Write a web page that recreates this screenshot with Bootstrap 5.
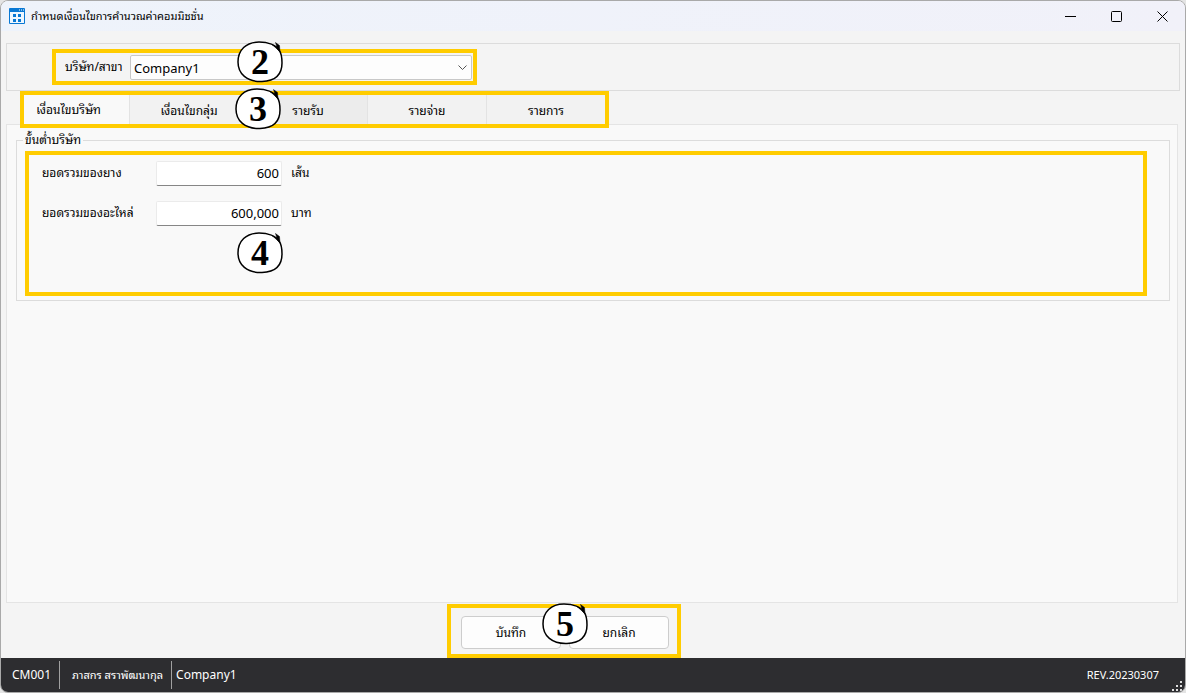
<!DOCTYPE html>
<html lang="th">
<head>
<meta charset="utf-8">
<meta name="viewport" content="width=device-width, initial-scale=1">
<title>กำหนดเงื่อนไขการคำนวณค่าคอมมิชชั่น</title>
<link href="https://cdn.jsdelivr.net/npm/bootstrap@5.3.0/dist/css/bootstrap.min.css" rel="stylesheet">
<style>
  body { font-family: "Noto Sans", "Noto Sans Thai Looped", "Noto Looped Thai", Loma, Waree, Garuda, "Noto Sans Thai", sans-serif; font-size: 12px; line-height: 16px; color: #000; background: #e4e4e4; }
  .app-window { background: #f4f4f4; border: 1px solid #a9a9a9; border-radius: 8px; overflow: hidden; }
  .title-bar { height: 30px; background: linear-gradient(90deg, #eef3fb, #f1f1f9); padding-left: 8px; }
  .title-bar h1 { margin-left: 6px; }
  .window-btn { width: 46px; height: 28px; border: 0; background: none; padding: 0; line-height: 0; }
  .thai { font-size: 12px; }
  .thai-sm, .revision { font-size: 11px; line-height: 16px; }
  .company-box { height: 48px; margin: 12px 5px 0; border: 1px solid #dcdcdc; padding: 5px 0 0 45px; }
  .hl { position: relative; border: 4px solid #fc0; }
  .company-hl { width: 425px; height: 36px; padding-left: 9px; }
  .company-hl .form-select { width: 342px; height: 25px; margin-right: 1px; padding: 1px 28px 0 3px; border: 1px solid #c8c8c8; border-radius: 2px; background-color: #fdfdfd; color: #000; font-size: 13px; line-height: 22px; background-position: right 3px center; background-size: 11px 11px;
    background-image: url("data:image/svg+xml,%3Csvg xmlns='http://www.w3.org/2000/svg' viewBox='0 0 11 11'%3E%3Cpath fill='none' stroke='%23555' d='M1.5 3.5l4 4 4-4'/%3E%3C/svg%3E"); }
  .company-hl label { width: 65px; }
  .tab-hl { z-index: 1; width: 589px; height: 37px; margin: 0 0 -4px 19px; background: #f2f2f2; }
  .tab-hl .nav-link { flex: 1 1 0; padding: 3px 0 0; border: 0; border-left: 1px solid #e3e3e3; border-radius: 0; color: #000; background: #f2f2f2; }
  .tab-hl .nav-link.active { flex: 0 0 105px; padding: 0 16px 0 0; border: 0; background: #f9f9f9; color: #000; }
  .tab-hl .hovered { background: #ececec; }
  .tab-panel { margin: 0 7px 0 5px; padding: 0 7px 8px 9px; background: #f9f9f9; border: 1px solid #e4e4e4; }
  .tab-panel fieldset { border: 1px solid #dcdcdc; margin-top: 7px; padding: 0 22px 4px 8px; }
  .tab-panel legend { float: none; width: auto; margin: 0 0 3px -2px; padding: 0 2px; background: #f9f9f9; line-height: 16px; }
  .field-hl { height: 145px; padding: 6px 0 0 13px; }
  .field-row { height: 40px; }
  .field-row label { width: 114px; }
  .field-row .form-control { width: 126px; height: 25px; margin-right: 9px; padding: 0 2px 1px; border: 1px solid #ebebeb; border-bottom-color: #868686; border-radius: 2px; background: #fff; color: #000; font-size: 13px; line-height: 20px; text-align: right; }
  .action-row { padding-right: 58px; margin-top: 1px; }
  .action-hl { width: 234px; height: 54px; padding: 4px 8px 0 10px; }
  .action-hl .btn { flex: 1 1 0; height: 33px; padding: 0; border: 1px solid #cdcdcd; border-radius: 4px; background: #fdfdfd; color: #000; }
  .status-bar { height: 34px; background: #2d2d30; color: #fff; padding: 0 2px 0 11px; }
  .status-bar .split { width: 1px; height: 28px; background: #a0a0a0; }
  .step { position: absolute; width: 46px; height: 42px; z-index: 2; font: bold 36px/42px "Liberation Serif", serif; text-align: center; }
  .step svg { position: absolute; inset: 0; }
  .step span { position: relative; }
  .step-company { left: 181px; top: -12px; }
  .step-tabs { left: 211px; top: -7px; }
  .step-fields { left: 208px; top: 77px; }
  .step-actions { left: 91px; top: -5px; }
</style>
</head>
<body>
<svg width="0" height="0" class="position-absolute" aria-hidden="true">
  <symbol id="ring" viewBox="0 0 46 42">
    <path d="M22 1C31 1 39 4 42 9C45 13 45 18 45 22C45 34 38 40 25 40.500C10 41 1 33 1 21C1 9 9 1 22 1Z" fill="#fff" stroke="#000" stroke-width="1.500"/>
    <path d="M35 3.500L40 6L38.500 1.500L42.500 4.500L43 11L39.500 7.500Z" fill="#000" stroke="#000" stroke-width=".5"/>
  </symbol>
</svg>
<div class="app-window min-vh-100 d-flex flex-column">
  <header class="title-bar d-flex align-items-center">
    <svg width="16" height="16" viewBox="0 0 16 16" class="flex-shrink-0" aria-hidden="true">
      <rect width="16" height="16" rx="1" fill="#0878d4"/><path d="M1 4h14v11H1z" fill="#eef7ff"/><path d="M10 1.500h1v1h-1zM12 1.500h1v1h-1zM14 1.500h1v1h-1z" fill="#fff"/>
      <path d="M4 6h3v3H4zM9 6h3v3H9zM4 11h3v3H4zM9 11h3v3H9z" fill="#0878d4"/>
    </svg>
    <h1 class="thai-sm my-0 me-auto fw-normal">กำหนดเงื่อนไขการคำนวณค่าคอมมิชชั่น</h1>
    <button class="window-btn" aria-label="Minimize"><svg width="11" height="11"><path d="M0 5.500h11" stroke="#000"/></svg></button>
    <button class="window-btn" aria-label="Maximize"><svg width="11" height="11"><rect x=".5" y=".5" width="10" height="10" rx="1" fill="none" stroke="#000"/></svg></button>
    <button class="window-btn" aria-label="Close"><svg width="11" height="11"><path d="M.5.5l10 10M10.500.5l-10 10" stroke="#000"/></svg></button>
  </header>

  <section class="company-box">
    <div class="hl company-hl d-flex align-items-center">
      <label class="thai" for="company">บริษัท/สาขา</label>
      <select id="company" class="form-select shadow-none"><option>Company1</option></select>
      <div class="step step-company"><svg width="46" height="42"><use href="#ring"/></svg><span>2</span></div>
    </div>
  </section>

  <nav class="hl tab-hl d-flex thai" role="tablist">
    <button class="nav-link active" role="tab" aria-selected="true">เงื่อนไขบริษัท</button>
    <button class="nav-link" role="tab">เงื่อนไขกลุ่ม</button>
    <button class="nav-link hovered" role="tab">รายรับ</button>
    <button class="nav-link" role="tab">รายจ่าย</button>
    <button class="nav-link" role="tab">รายการ</button>
    <div class="step step-tabs"><svg width="46" height="42"><use href="#ring"/></svg><span>3</span></div>
  </nav>

  <main class="tab-panel flex-grow-1">
    <fieldset>
      <legend class="thai">ขั้นต่ำบริษัท</legend>
      <div class="hl field-hl">
        <div class="field-row d-flex align-items-start">
          <label class="thai pt-1" for="tires">ยอดรวมของยาง</label>
          <input id="tires" class="form-control" value="600">
          <span class="thai pt-1">เส้น</span>
        </div>
        <div class="field-row d-flex align-items-start">
          <label class="thai pt-1" for="parts">ยอดรวมของอะไหล่</label>
          <input id="parts" class="form-control" value="600,000">
          <span class="thai pt-1">บาท</span>
        </div>
        <div class="step step-fields"><svg width="46" height="42"><use href="#ring"/></svg><span>4</span></div>
      </div>
    </fieldset>
  </main>

  <div class="action-row d-flex justify-content-center">
    <div class="hl action-hl d-flex gap-2 align-items-start">
      <button class="btn thai mt-1">บันทึก</button>
      <button class="btn thai mt-1">ยกเลิก</button>
      <div class="step step-actions"><svg width="46" height="42"><use href="#ring"/></svg><span>5</span></div>
    </div>
  </div>

  <footer class="status-bar d-flex align-items-center">
    <span>CM001</span><span class="split ms-2 me-2"></span>
    <span class="thai-sm ms-1">ภาสกร สราพัฒนากุล</span><span class="split ms-2 me-1"></span>
    <span>Company1</span>
    <span class="revision ms-auto me-2">REV.20230307</span>
    <svg width="12" height="12" class="align-self-end ms-1" aria-hidden="true"><path d="M9 1h2v2H9zM5 5h2v2H5zM9 5h2v2H9zM1 9h2v2H1zM5 9h2v2H5zM9 9h2v2H9z" fill="#ddd"/></svg>
  </footer>
</div>
<script src="https://cdn.jsdelivr.net/npm/bootstrap@5.3.0/dist/js/bootstrap.bundle.min.js"></script>
</body>
</html>
